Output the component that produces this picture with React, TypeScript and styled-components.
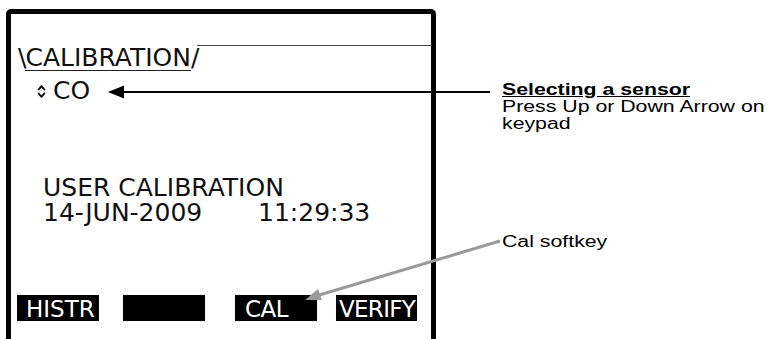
import React from "react";
import styled, { createGlobalStyle } from "styled-components";

const Global = createGlobalStyle`
  html, body { margin: 0; padding: 0; background: #ffffff; overflow: hidden; }
  body { width: 771px; height: 339px; }
`;

const Page = styled.div`
  position: relative;
  width: 771px;
  height: 339px;
  display: flex;
  align-items: flex-start;
  overflow: hidden;
`;

const Device = styled.div`
  margin: 9px 0 0 6px;
  width: 430px;
  height: 350px;
  box-sizing: border-box;
  border: 5px solid #000;
  border-radius: 5px;
  display: flex;
  flex-direction: column;
  font-family: "DejaVu Sans", Verdana, sans-serif;
  font-size: 25px;
  color: #111;
  flex-shrink: 0;
`;

const TabRow = styled.div`
  margin-top: 31px;
  padding-left: 7px;
  height: 26px;
  display: flex;
  align-items: stretch;
`;

const TabGlyph = styled.span`
  line-height: 25px;
  display: block;
  letter-spacing: -1px;
`;

const TabName = styled.span`
  display: block;
  line-height: 25px;
  border-bottom: 1.5px solid #222;
`;

const TabRule = styled.div`
  flex: 1;
  border-top: 1.5px solid #444;
  margin-left: -1px;
`;

const SensorRow = styled.div`
  margin-top: 8px;
  padding-left: 26px;
  display: flex;
  align-items: center;
  gap: 7px;
  line-height: 24px;
`;

const Lines = styled.div`
  margin-top: 72px;
  padding-left: 32px;
  display: flex;
  flex-direction: column;
  line-height: 25px;
`;

const DateRow = styled.div`
  display: grid;
  grid-template-columns: 215px auto;
`;

const Softkeys = styled.div`
  margin-top: 70px;
  display: flex;
  align-items: flex-start;
`;

const Softkey = styled.div<{ $w: number; $pad: number; $gap: number; $ls: number }>`
  width: ${(p) => p.$w}px;
  margin-left: ${(p) => p.$gap}px;
  height: 26px;
  box-sizing: border-box;
  padding: 3px 0 0 ${(p) => p.$pad}px;
  background: #000;
  color: #fff;
  font-size: 23px;
  line-height: 23px;
  letter-spacing: ${(p) => p.$ls}px;
  white-space: nowrap;
`;

const Callouts = styled.div`
  margin-left: 66px;
  padding-top: 81px;
  display: flex;
  flex-direction: column;
  font-family: "Liberation Sans", Arial, sans-serif;
  font-size: 16px;
  line-height: 17px;
  color: #000;
  transform: scaleX(1.33);
  transform-origin: left top;
  white-space: nowrap;
`;

const Callout = styled.div<{ $top: number }>`
  margin-top: ${(p) => p.$top}px;
`;

const CalloutTitle = styled.div`
  font-weight: bold;
  text-decoration: underline;
`;

const Overlay = styled.svg`
  position: absolute;
  left: 0;
  top: 0;
  pointer-events: none;
`;

const UpDown = () => (
  <svg width="9" height="13" viewBox="0 0 9 13">
    <path d="M1.2 5.2 L4.5 1.2 L7.8 5.2" fill="none" stroke="#111" strokeWidth="1.9" strokeLinejoin="round" />
    <path d="M1.2 7.8 L4.5 11.8 L7.8 7.8" fill="none" stroke="#111" strokeWidth="1.9" strokeLinejoin="round" />
  </svg>
);

const keys = [
  { label: "HISTR", w: 82, pad: 9, gap: 6, ls: 0 },
  { label: "", w: 82, pad: 0, gap: 24, ls: 0 },
  { label: "CAL", w: 82, pad: 10, gap: 30, ls: -0.5 },
  { label: "VERIFY", w: 81, pad: 3, gap: 19, ls: -0.7 },
];

export default function App() {
  return (
    <>
      <Global />
      <Page>
        <Device>
          <TabRow>
            <TabGlyph>\</TabGlyph>
            <TabName>CALIBRATION</TabName>
            <TabGlyph>/</TabGlyph>
            <TabRule />
          </TabRow>
          <SensorRow>
            <UpDown />
            <span>CO</span>
          </SensorRow>
          <Lines>
            <div>USER CALIBRATION</div>
            <DateRow>
              <span>14-JUN-2009</span>
              <span>11:29:33</span>
            </DateRow>
          </Lines>
          <Softkeys>
            {keys.map((k, i) => (
              <Softkey key={i} $w={k.w} $pad={k.pad} $gap={k.gap} $ls={k.ls}>
                {k.label}
              </Softkey>
            ))}
          </Softkeys>
        </Device>
        <Callouts>
          <Callout $top={0}>
            <CalloutTitle>Selecting a sensor</CalloutTitle>
            <div>Press Up or Down Arrow on</div>
            <div>keypad</div>
          </Callout>
          <Callout $top={101}>Cal softkey</Callout>
        </Callouts>
        <Overlay width="771" height="339" viewBox="0 0 771 339">
          <line x1="120" y1="92" x2="490" y2="92" stroke="#000" strokeWidth="2" />
          <polygon points="108,92 124,85.5 124,98.5" fill="#000" />
          <line x1="500" y1="241" x2="316" y2="296" stroke="#9a9a9a" strokeWidth="3" />
          <polygon points="305,300 318,289 322,300" fill="#9a9a9a" />
        </Overlay>
      </Page>
    </>
  );
}
